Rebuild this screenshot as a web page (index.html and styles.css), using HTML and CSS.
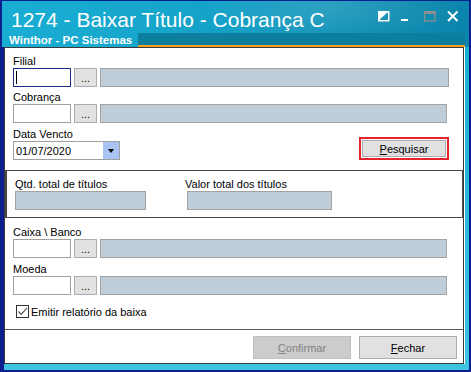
FILE: index.html
```html
<!DOCTYPE html>
<html lang="pt-BR">
<head>
    <meta charset="UTF-8" />
    <title>1274 - Baixar Título - Cobrança C</title>
    <link rel="stylesheet" href="styles.css">
</head>
<body>
    <div class="window">
        <div class="titlebar">
            <div class="title-row">
                <span class="title">1274 - Baixar Título - Cobrança C</span>
                <div class="controls">
                    <svg width="12" height="11" viewBox="0 0 12 11">
                        <polygon points="0,0 11,0 0,10" fill="#fff" />
                        <rect x="0.75" y="0.75" width="10" height="9" fill="none" stroke="#fff" stroke-width="1.5" />
                    </svg>
                    <svg width="12" height="11" viewBox="0 0 12 11">
                        <rect x="0" y="8" width="7" height="2" fill="#fff" />
                    </svg>
                    <svg width="12" height="11" viewBox="0 0 12 11">
                        <rect x="0.5" y="0.5" width="10.5" height="9.5" fill="none" stroke="#8e8e8e" stroke-width="1.3" />
                        <rect x="0" y="0" width="11.5" height="3" fill="#8e8e8e" />
                    </svg>
                    <svg width="12" height="11" viewBox="0 0 12 11">
                        <path d="M1 0.5 L10.5 10 M10.5 0.5 L1 10" stroke="#fff" stroke-width="2" />
                    </svg>
                </div>
            </div>
            <div class="brand-row">
                <span class="brand">Winthor - PC Sistemas</span>
                <span class="brand-bar"></span>
            </div>
        </div>

        <div class="body">
            <div class="content">
                <div class="section top">
                    <div class="field">
                        <label>Filial</label>
                        <div class="lookup">
                            <span class="code focus"><span class="caret"></span></span>
                            <span class="dots">...</span>
                            <span class="desc wide"></span>
                        </div>
                    </div>
                    <div class="field">
                        <label>Cobrança</label>
                        <div class="lookup">
                            <span class="code"></span>
                            <span class="dots">...</span>
                            <span class="desc"></span>
                        </div>
                    </div>
                    <div class="date-row">
                        <div class="field">
                            <label>Data Vencto</label>
                            <div class="date">
                                <span>01/07/2020</span>
                                <span class="drop"></span>
                            </div>
                        </div>
                        <span class="highlight">
                            <button type="button" class="btn"><u>P</u>esquisar</button>
                        </span>
                    </div>
                </div>

                <div class="totals">
                    <div class="total">
                        <label>Qtd. total de títulos</label>
                        <span class="readonly qtd"></span>
                    </div>
                    <div class="total">
                        <label>Valor total dos títulos</label>
                        <span class="readonly valor"></span>
                    </div>
                </div>

                <div class="section bottom">
                    <div class="field">
                        <label>Caixa \ Banco</label>
                        <div class="lookup">
                            <span class="code"></span>
                            <span class="dots">...</span>
                            <span class="desc"></span>
                        </div>
                    </div>
                    <div class="field">
                        <label>Moeda</label>
                        <div class="lookup">
                            <span class="code"></span>
                            <span class="dots">...</span>
                            <span class="desc"></span>
                        </div>
                    </div>
                    <div class="check">
                        <span class="box">
                            <svg width="11" height="11" viewBox="0 0 11 11">
                                <path d="M1.5 5.5 L4.2 8.3 L10 1.8" fill="none" stroke="#555" stroke-width="1.2" />
                            </svg>
                        </span>
                        <span>Emitir relatório da baixa</span>
                    </div>
                </div>

                <div class="footer">
                    <button type="button" class="btn disabled"><u>C</u>onfirmar</button>
                    <button type="button" class="btn"><u>F</u>echar</button>
                </div>
            </div>
        </div>
    </div>
</body>
</html>
```

FILE: styles.css
```css
body {
    margin: 0;
    font-family: "Liberation Sans", Arial, sans-serif;
    font-size: 11px;
    color: #000;
    background: #fff;
}
.window {
    width: 471px;
    height: 372px;
    box-sizing: border-box;
    padding: 1px 2px 2px 2px;
    background: #0b1f8f;
    display: flex;
    flex-direction: column;
}
.titlebar {
    height: 46px;
    background:
        radial-gradient(ellipse 190px 55px at 330px 6px, rgba(255,255,255,0.13), transparent 70%),
        linear-gradient(100deg, #1aaed4 0%, #15a2c8 45%, #0d8fb5 75%, #0a84aa 100%);
    display: flex;
    flex-direction: column;
}
.title-row {
    height: 32px;
    display: flex;
    padding: 0 10px 0 9px;
}
.title {
    font-family: "Liberation Sans", Arial, sans-serif;
    font-size: 21px;
    line-height: 24px;
    padding-top: 7px;
    color: #fff;
}
.controls {
    margin-left: auto;
    margin-top: 10px;
    display: flex;
    gap: 11px;
}
.controls svg {
    display: block;
}
.brand-row {
    height: 14px;
    display: flex;
    padding: 0 4px 0 7px;
}
.brand {
    font-weight: bold;
    font-size: 11.5px;
    line-height: 14px;
    color: #fff;
}
.brand-bar {
    flex: 1;
    margin-left: 6px;
    background: #0b7f9d;
    border-bottom: 2px solid #eca21e;
}
.body {
    flex: 1;
    display: flex;
    border-left: 2px solid #0b1f8f;
    padding: 0 5px 6px 0;
    background: linear-gradient(180deg, #17b0d3, #3cc4e2);
}
.content {
    flex: 1;
    background: #fff;
    border: 1px solid #3a3a3a;
    box-shadow: 1px 0 0 #ffffff;
    display: flex;
    flex-direction: column;
}
.section {
    padding-left: 8px;
}
.top {
    padding: 6px 14px 10px 8px;
}
label {
    display: block;
    line-height: 14px;
}
.field {
    margin-bottom: 3px;
}
.lookup {
    display: flex;
    gap: 3px;
    height: 19px;
}
.code {
    width: 58px;
    box-sizing: border-box;
    border: 1px solid #a0a0a0;
    background: #fff;
    position: relative;
}
.code.focus {
    border-color: #1b2b86;
}
.caret {
    position: absolute;
    left: 2px;
    top: 2px;
    width: 1px;
    height: 13px;
    background: #000;
}
.dots {
    width: 23px;
    box-sizing: border-box;
    border: 1px solid #adadad;
    background: #e1e1e1;
    text-align: center;
    line-height: 19px;
    font-size: 11px;
}
.desc {
    flex: 1;
    box-sizing: border-box;
    border: 1px solid #a3a3a3;
    background: #bfcdd9;
    margin-right: 2px;
}
.desc.wide {
    margin-right: 0;
}
.date-row {
    display: flex;
    justify-content: space-between;
    align-items: flex-end;
    margin-top: 4px;
}
.date-row .field {
    margin-bottom: 0;
}
.date {
    width: 107px;
    height: 19px;
    box-sizing: border-box;
    border: 1px solid #a0a0a0;
    display: flex;
    align-items: center;
    padding-left: 2px;
    position: relative;
}
.drop {
    margin-left: auto;
    width: 16px;
    height: 17px;
    background: #a9c3f3;
    position: relative;
}
.drop::after {
    content: "";
    position: absolute;
    left: 5px;
    top: 7px;
    border-left: 3.5px solid transparent;
    border-right: 3.5px solid transparent;
    border-top: 4px solid #000;
}
.highlight {
    display: block;
    border: 2px solid #e5232b;
    padding: 1px;
}
.btn {
    font-family: "Liberation Sans", Arial, sans-serif;
    font-size: 11px;
    color: #000;
    background: #e1e1e1;
    border: 1px solid #adadad;
    padding: 0;
    display: block;
}
.highlight .btn {
    width: 84px;
    height: 17px;
}
.totals {
    border: 1px solid #4a4a4a;
    border-width: 1px 1px 1px 2px;
    padding: 6px 8px 7px 8px;
    display: flex;
    gap: 39px;
}
.readonly {
    display: block;
    height: 19px;
    box-sizing: border-box;
    border: 1px solid #a3a3a3;
    background: #bfcdd9;
}
.qtd {
    width: 131px;
}
.valor {
    width: 145px;
    margin-left: 2px;
}
.bottom {
    flex: 1;
    padding: 7px 14px 0 8px;
}
.bottom .field {
    margin-bottom: 4px;
}
.check {
    display: flex;
    align-items: center;
    gap: 2px;
    margin-top: 10px;
    margin-left: 3px;
}
.box {
    width: 13px;
    height: 13px;
    box-sizing: border-box;
    border: 1px solid #333;
    background: #fff;
    display: flex;
    align-items: center;
    justify-content: center;
}
.footer {
    border-top: 1px solid #5a5a5a;
    display: flex;
    justify-content: flex-end;
    gap: 8px;
    padding: 6px 6px 4px 0;
}
.footer .btn {
    width: 98px;
    height: 23px;
}
.btn.disabled {
    background: #cccccc;
    border-color: #bfbfbf;
    color: #838383;
}
```
